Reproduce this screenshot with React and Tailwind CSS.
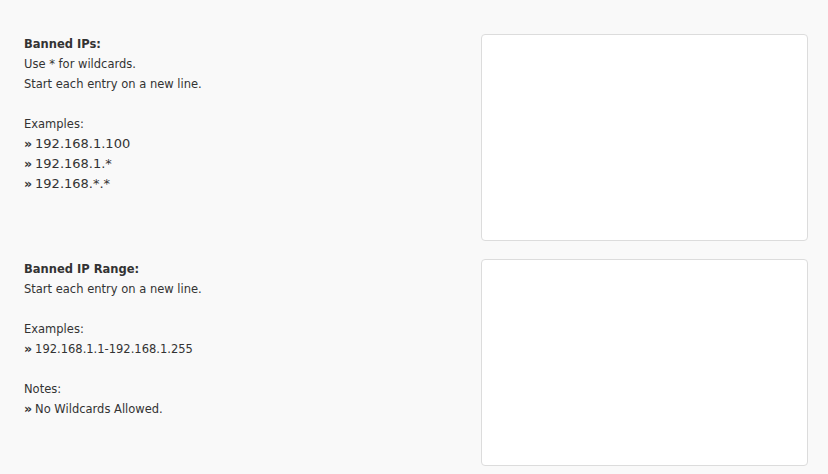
import { useState } from "react";

function Bullet({ children, big }) {
  return (
    <div className={big ? "leading-[19px]" : "leading-[20px]"}>
      <span className="font-bold text-[12.5px] mr-[3px]">»</span>
      <span className={big ? "text-[13px]" : "text-[11.5px]"}>{children}</span>
    </div>
  );
}

export default function App() {
  const [ips, setIps] = useState("");
  const [ranges, setRanges] = useState("");

  return (
    <div className="min-h-[474px] bg-[#f9f9f9] pl-6 pr-5 pt-[34px] text-[11.5px] leading-[20px] text-[#333] font-['DejaVu_Sans',Verdana,sans-serif]">
      <div className="flex flex-col gap-[18px]">
        <div className="flex">
          <div className="flex-1">
            <div className="font-bold">Banned IPs:</div>
            <div>Use * for wildcards.</div>
            <div>Start each entry on a new line.</div>
            <div className="h-5" />
            <div>Examples:</div>
            <Bullet big>192.168.1.100</Bullet>
            <Bullet big>192.168.1.*</Bullet>
            <Bullet big>192.168.*.*</Bullet>
          </div>
          <textarea
            className="w-[327px] h-[207px] bg-white border border-[#dcdcdc] rounded resize-none p-2 outline-none"
            value={ips}
            onChange={(e) => setIps(e.target.value)}
          />
        </div>
        <div className="flex">
          <div className="flex-1">
            <div className="font-bold">Banned IP Range:</div>
            <div>Start each entry on a new line.</div>
            <div className="h-5" />
            <div>Examples:</div>
            <Bullet>192.168.1.1-192.168.1.255</Bullet>
            <div className="h-5" />
            <div>Notes:</div>
            <Bullet>No Wildcards Allowed.</Bullet>
          </div>
          <textarea
            className="w-[327px] h-[207px] bg-white border border-[#dcdcdc] rounded resize-none p-2 outline-none"
            value={ranges}
            onChange={(e) => setRanges(e.target.value)}
          />
        </div>
      </div>
    </div>
  );
}
